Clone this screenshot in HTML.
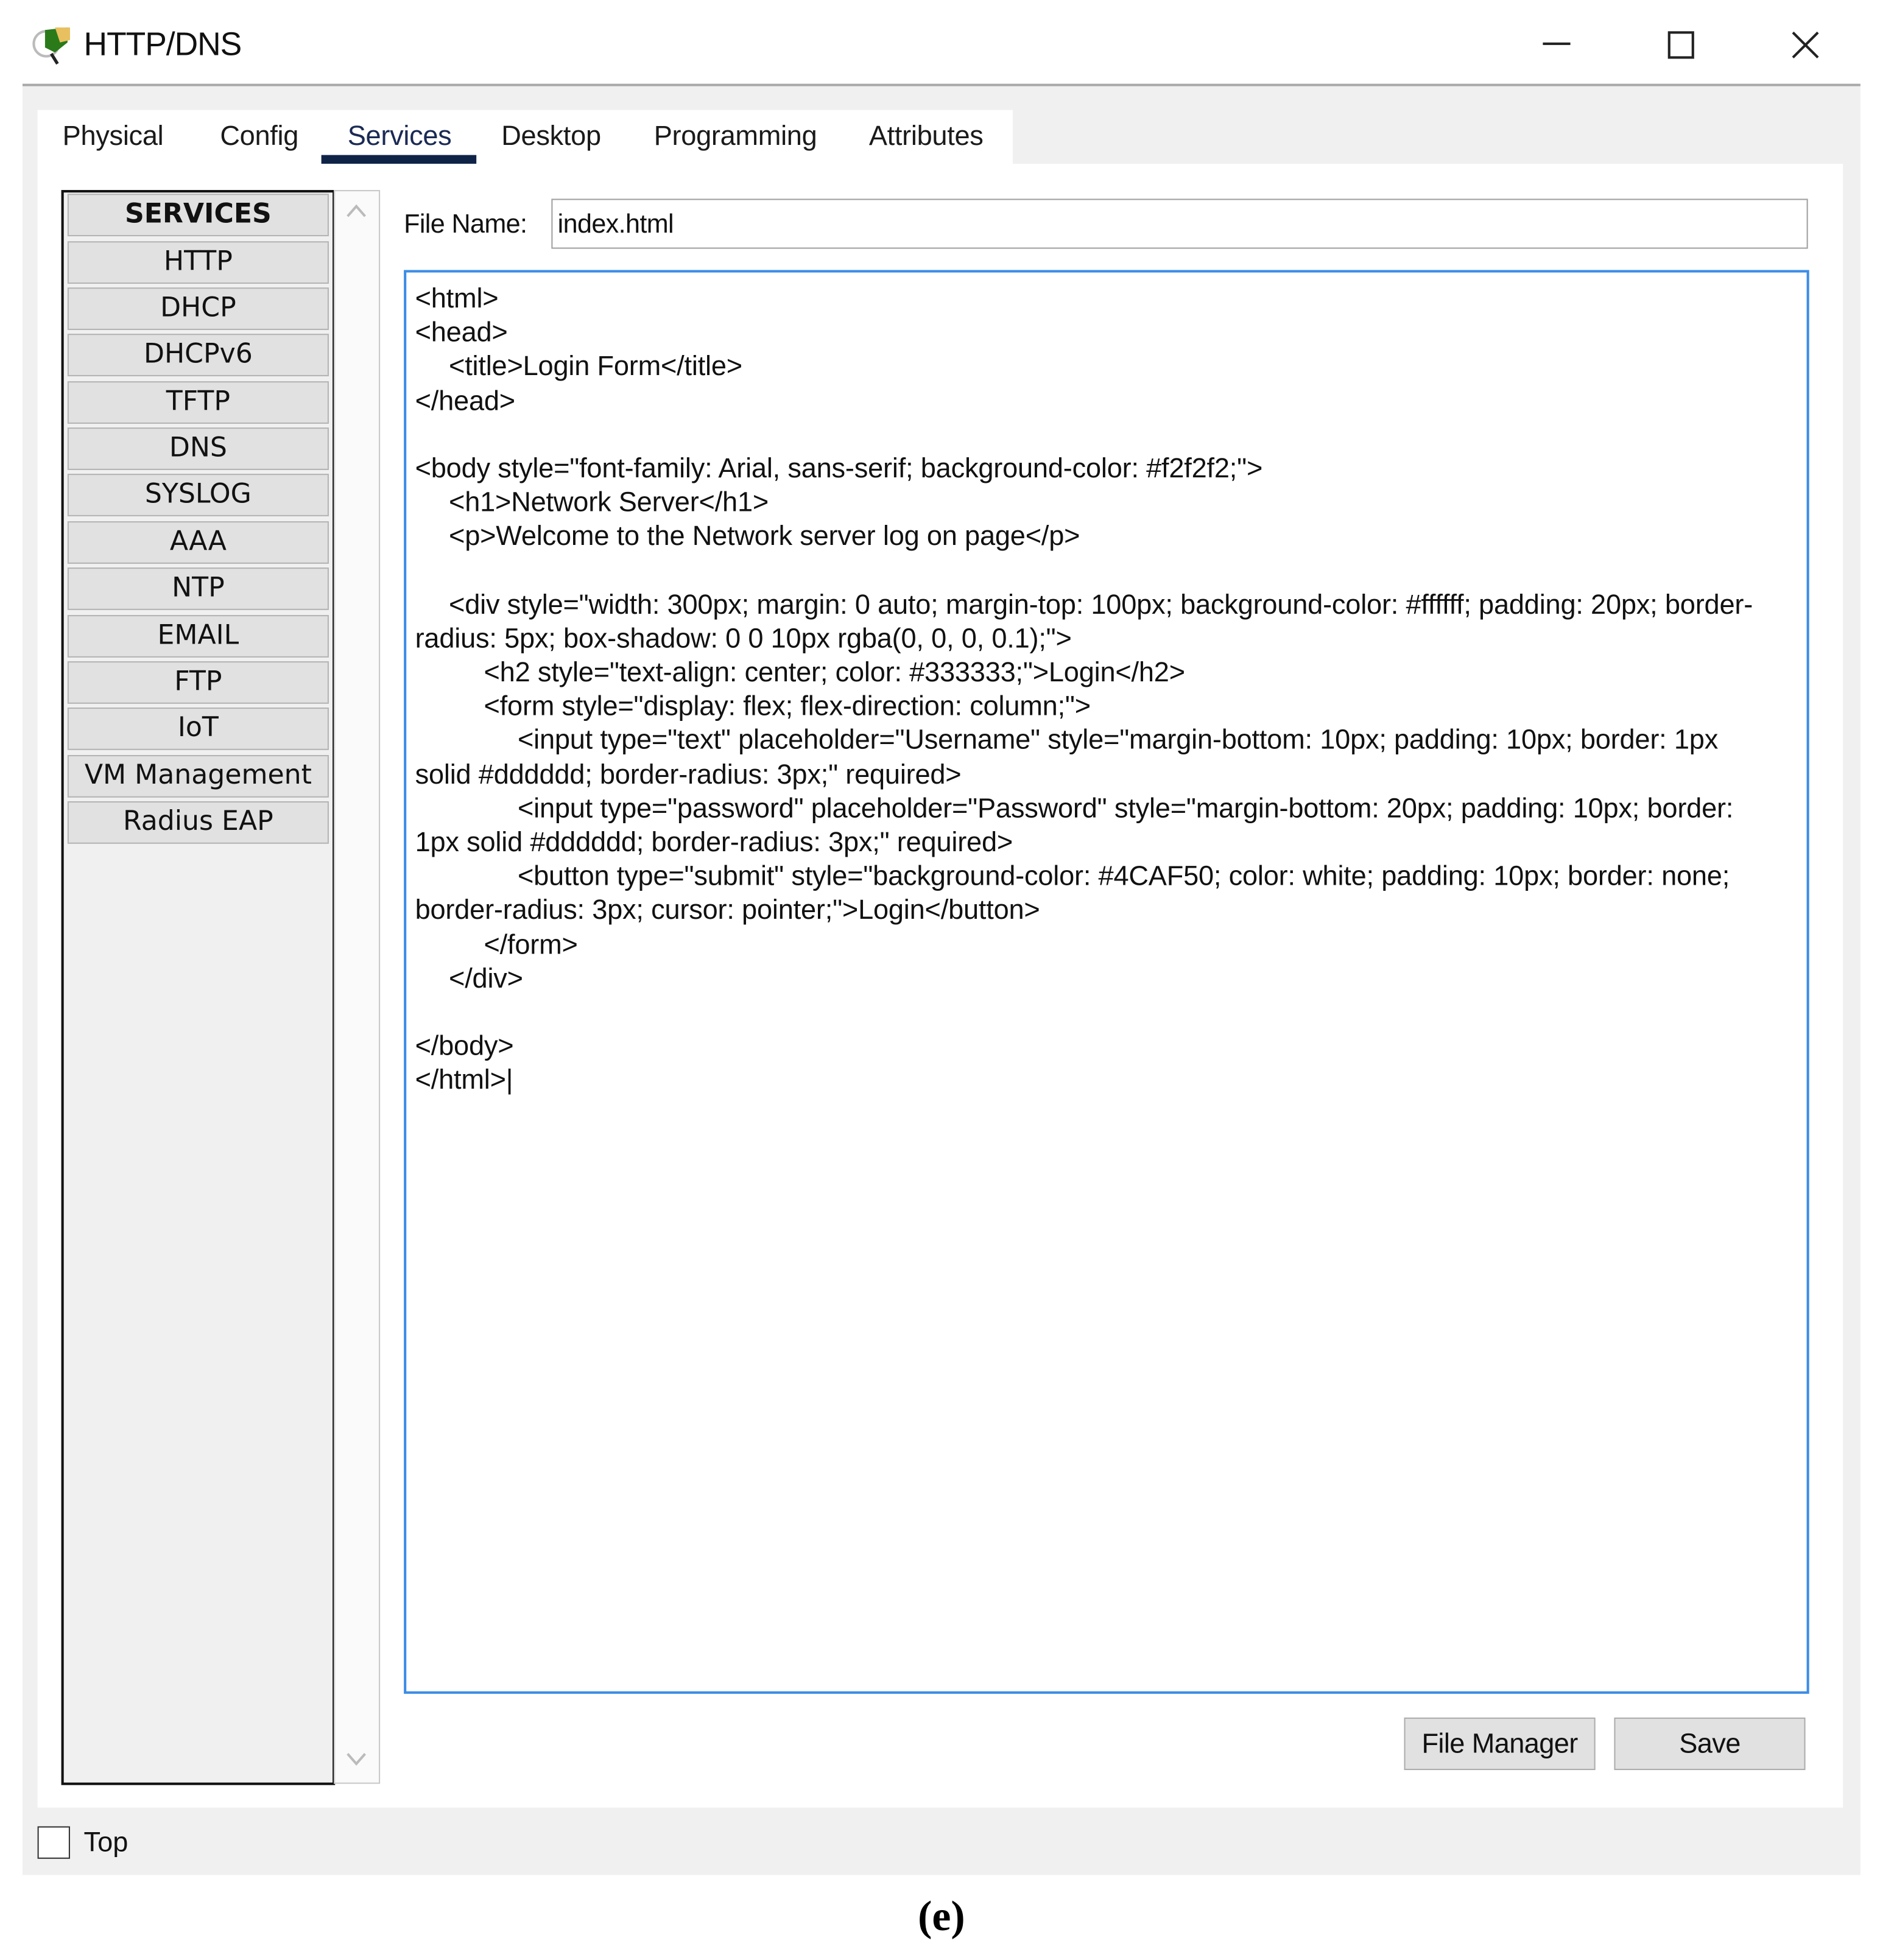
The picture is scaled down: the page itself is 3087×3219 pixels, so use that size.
<!DOCTYPE html>
<html><head><meta charset="utf-8"><style>
html,body{margin:0;padding:0;background:#fff;width:3087px;height:3216px;overflow:hidden}
#w{position:absolute;left:0;top:0;width:1504px;height:1568px;transform:scale(2.053);transform-origin:0 0;font-family:"Liberation Sans",Arial,sans-serif;color:#000}
.a{position:absolute}
.tab{position:absolute;top:96px;font-size:22px;color:#1a1a1a;letter-spacing:-0.15px}
.sb{position:absolute;left:54px;width:207px;height:32px;background:#e1e1e1;border:1px solid #b4b4b4;font-family:"DejaVu Sans",Verdana,sans-serif;font-size:21.5px;text-align:center;line-height:32px;color:#111}
.code{position:absolute;left:332px;top:225px;font-size:22px;line-height:27.2px;letter-spacing:-0.1px;color:#111}
.code div{height:27.2px;white-space:pre}
.btn{position:absolute;top:1374px;width:151px;height:40px;background:#e1e1e1;border:1px solid #adadad;font-size:22px;text-align:center;line-height:40px;color:#111;letter-spacing:-0.3px}
</style></head><body><div id="w">
<svg class="a" style="left:24px;top:20px" width="36" height="34" viewBox="0 0 36 34">
<ellipse cx="13" cy="15" rx="10" ry="10" fill="none" stroke="#bbb" stroke-width="2"/>
<path d="M12 4 L30 2 L30 14 L20 22 L12 18 Z" fill="#2a7a1a"/>
<path d="M20 2 L32 2 L32 12 L24 14 Z" fill="#e8c060"/>
<line x1="17" y1="23" x2="22" y2="31" stroke="#222" stroke-width="2.5"/>
</svg>
<div class="a" style="left:67px;top:20px;font-size:26px;color:#111;letter-spacing:-0.5px">HTTP/DNS</div>
<div class="a" style="left:1234px;top:34px;width:22px;height:2px;background:#222"></div>
<div class="a" style="left:1334px;top:25px;width:17px;height:18px;border:2px solid #222"></div>
<svg class="a" style="left:1432px;top:24px" width="24" height="24"><path d="M2 2L22 22M22 2L2 22" stroke="#222" stroke-width="2"/></svg>
<div class="a" style="left:18px;top:67px;width:1470px;height:2px;background:#a8a8a8"></div>
<div class="a" style="left:18px;top:69px;width:1470px;height:1431px;background:#f0f0f0"></div>
<div class="a" style="left:30px;top:88px;width:780px;height:44px;background:#fff"></div>
<div class="a" style="left:30px;top:131px;width:1444px;height:1315px;background:#fff"></div>
<div class="tab" style="left:50px">Physical</div>
<div class="tab" style="left:176px">Config</div>
<div class="tab" style="left:278px;color:#1a2a55">Services</div>
<div class="tab" style="left:401px">Desktop</div>
<div class="tab" style="left:523px">Programming</div>
<div class="tab" style="left:695px">Attributes</div>
<div class="a" style="left:257px;top:124px;width:124px;height:7px;background:#0f2347"></div>
<div class="a" style="left:49px;top:152px;width:215px;height:1272px;border:2px solid #111;background:#f0f0f0"></div>
<div class="a" style="left:267px;top:152px;width:35px;height:1273px;border:1px solid #c8c8c8;background:#fafafa"></div>
<svg class="a" style="left:276px;top:162px" width="18" height="14"><path d="M2 11L9 3L16 11" fill="none" stroke="#bbb" stroke-width="2"/></svg>
<svg class="a" style="left:276px;top:1400px" width="18" height="14"><path d="M2 3L9 11L16 3" fill="none" stroke="#bbb" stroke-width="2"/></svg>
<div class="sb" style="top:155px;font-weight:bold;font-size:21.5px">SERVICES</div>
<div class="sb" style="top:193px">HTTP</div>
<div class="sb" style="top:230px">DHCP</div>
<div class="sb" style="top:267px">DHCPv6</div>
<div class="sb" style="top:305px">TFTP</div>
<div class="sb" style="top:342px">DNS</div>
<div class="sb" style="top:379px">SYSLOG</div>
<div class="sb" style="top:417px">AAA</div>
<div class="sb" style="top:454px">NTP</div>
<div class="sb" style="top:492px">EMAIL</div>
<div class="sb" style="top:529px">FTP</div>
<div class="sb" style="top:566px">IoT</div>
<div class="sb" style="top:604px">VM Management</div>
<div class="sb" style="top:641px">Radius EAP</div>
<div class="a" style="left:323px;top:168px;font-size:21px;color:#111;letter-spacing:-0.3px">File Name:</div>
<div class="a" style="left:441px;top:159px;width:1003px;height:38px;border:1px solid #a0a0a0;background:#fff"></div>
<div class="a" style="left:446px;top:168px;font-size:21px;color:#111;letter-spacing:-0.3px">index.html</div>
<div class="a" style="left:323px;top:216px;width:1120px;height:1135px;border:2px solid #3c8ce6;background:#fff"></div>
<div class="code"><div>&lt;html&gt;</div><div>&lt;head&gt;</div><div style="padding-left:27px">&lt;title&gt;Login Form&lt;/title&gt;</div><div>&lt;/head&gt;</div><div></div><div>&lt;body style="font-family: Arial, sans-serif; background-color: #f2f2f2;"&gt;</div><div style="padding-left:27px">&lt;h1&gt;Network Server&lt;/h1&gt;</div><div style="padding-left:27px">&lt;p&gt;Welcome to the Network server log on page&lt;/p&gt;</div><div></div><div style="padding-left:27px">&lt;div style="width: 300px; margin: 0 auto; margin-top: 100px; background-color: #ffffff; padding: 20px; border-</div><div>radius: 5px; box-shadow: 0 0 10px rgba(0, 0, 0, 0.1);"&gt;</div><div style="padding-left:55px">&lt;h2 style="text-align: center; color: #333333;"&gt;Login&lt;/h2&gt;</div><div style="padding-left:55px">&lt;form style="display: flex; flex-direction: column;"&gt;</div><div style="padding-left:82px">&lt;input type="text" placeholder="Username" style="margin-bottom: 10px; padding: 10px; border: 1px</div><div>solid #dddddd; border-radius: 3px;" required&gt;</div><div style="padding-left:82px">&lt;input type="password" placeholder="Password" style="margin-bottom: 20px; padding: 10px; border:</div><div>1px solid #dddddd; border-radius: 3px;" required&gt;</div><div style="padding-left:82px">&lt;button type="submit" style="background-color: #4CAF50; color: white; padding: 10px; border: none;</div><div>border-radius: 3px; cursor: pointer;"&gt;Login&lt;/button&gt;</div><div style="padding-left:55px">&lt;/form&gt;</div><div style="padding-left:27px">&lt;/div&gt;</div><div></div><div>&lt;/body&gt;</div><div>&lt;/html&gt;|</div></div>
<div class="btn" style="left:1123px">File Manager</div>
<div class="btn" style="left:1291px">Save</div>
<div class="a" style="left:30px;top:1461px;width:24px;height:24px;border:1px solid #333;background:#fff"></div>
<div class="a" style="left:67px;top:1461px;font-size:22px;color:#111">Top</div>
<div class="a" style="left:0;top:1515px;width:1506px;text-align:center;font-family:'Liberation Serif',serif;font-weight:bold;font-size:34px;color:#000">(e)</div>
</div></body></html>
